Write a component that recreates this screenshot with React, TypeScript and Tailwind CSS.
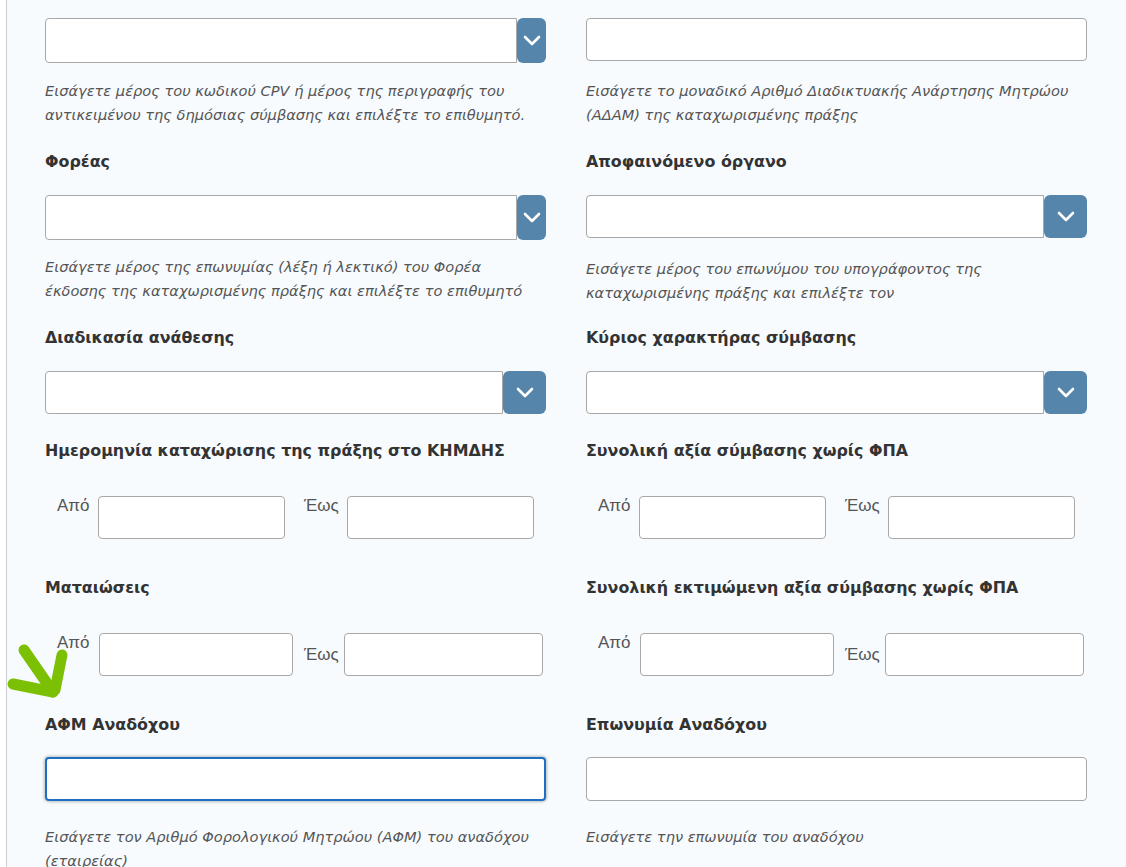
import React from 'react';

const label = 'text-[15.9px] leading-[22px] font-bold text-[#333]';
const help = 'text-[14.6px] leading-[24px] italic text-[#555]';
const box = 'bg-white border border-[#a8a8a8] rounded-[4px]';
const small = 'text-[17px] leading-[20px] text-[#555] font-["Liberation_Sans",Arial,sans-serif]';

function Chevron() {
  return (
    <svg width="18" height="11" viewBox="0 0 18 11" fill="none">
      <path d="M2 2l7 7 7-7" stroke="white" strokeWidth="2.6" strokeLinecap="round" strokeLinejoin="round" />
    </svg>
  );
}

function Combo({ btn, h = 'h-[45px]' }: { btn: string; h?: string }) {
  return (
    <div className={`flex ${h}`}>
      <div className="flex-1 bg-white border border-[#a8a8a8] rounded-l-[4px]" />
      <button className={`${btn} h-full bg-[#5585ab] rounded-[6px] flex items-center justify-center`}>
        <Chevron />
      </button>
    </div>
  );
}

function RangeA() {
  return (
    <div className="flex items-start pl-3">
      <span className={small + ' w-[31px]'}>Από</span>
      <div className={box + ' ml-[10px] w-[187px] h-[43px]'} />
      <span className={small + ' ml-[19px] w-[36px]'}>Έως</span>
      <div className={box + ' ml-[7px] w-[187px] h-[43px]'} />
    </div>
  );
}

function RangeB() {
  return (
    <div className="flex items-start pl-3">
      <span className={small + ' w-[31px]'}>Από</span>
      <div className={box + ' ml-[11px] w-[194px] h-[43px]'} />
      <span className={small + ' ml-[11px] w-[36px] mt-[12px]'}>Έως</span>
      <div className={box + ' ml-[4px] w-[199px] h-[43px]'} />
    </div>
  );
}

export default function App() {
  return (
    <div className="min-h-screen bg-white font-['DejaVu_Sans',Verdana,sans-serif] relative">
      <div className="ml-[6px] border-l border-[#cfcfcf] bg-[#f7fbfe] min-h-[867px] pl-[38px] pr-[39px] pt-[18px] pb-4">
        <div className="grid grid-cols-2 gap-x-10">
          <Combo btn="w-[29px]" />
          <div className={box + ' h-[43px]'} />

          <p className={help + ' mt-4'}>
            Εισάγετε μέρος του κωδικού CPV ή μέρος της περιγραφής του<br />
            αντικειμένου της δημόσιας σύμβασης και επιλέξτε το επιθυμητό.
          </p>
          <p className={help + ' mt-4'}>
            Εισάγετε το μοναδικό Αριθμό Διαδικτυακής Ανάρτησης Μητρώου<br />
            (ΑΔΑΜ) της καταχωρισμένης πράξης
          </p>

          <div className={label + ' mt-6'}>Φορέας</div>
          <div className={label + ' mt-6'}>Αποφαινόμενο όργανο</div>

          <div className="mt-[22px]">
            <Combo btn="w-[29px]" />
          </div>
          <div className="mt-[22px]">
            <Combo btn="w-[43px]" h="h-[43px]" />
          </div>

          <p className={help + ' mt-[15px]'}>
            Εισάγετε μέρος της επωνυμίας (λέξη ή λεκτικό) του Φορέα<br />
            έκδοσης της καταχωρισμένης πράξης και επιλέξτε το επιθυμητό
          </p>
          <p className={help + ' mt-[17px]'}>
            Εισάγετε μέρος του επωνύμου του υπογράφοντος της<br />
            καταχωρισμένης πράξης και επιλέξτε τον
          </p>

          <div className={label + ' mt-[22px]'}>Διαδικασία ανάθεσης</div>
          <div className={label + ' mt-[22px]'}>Κύριος χαρακτήρας σύμβασης</div>

          <div className="mt-[22px]">
            <Combo btn="w-[43px]" h="h-[43px]" />
          </div>
          <div className="mt-[22px]">
            <Combo btn="w-[43px]" h="h-[43px]" />
          </div>

          <div className={label + ' mt-[26px]'}>Ημερομηνία καταχώρισης της πράξης στο ΚΗΜΔΗΣ</div>
          <div className={label + ' mt-[26px]'}>Συνολική αξία σύμβασης χωρίς ΦΠΑ</div>

          <div className="mt-[34px]">
            <RangeA />
          </div>
          <div className="mt-[34px]">
            <RangeA />
          </div>

          <div className={label + ' mt-[38px]'}>Ματαιώσεις</div>
          <div className={label + ' mt-[38px]'}>Συνολική εκτιμώμενη αξία σύμβασης χωρίς ΦΠΑ</div>

          <div className="mt-[34px]">
            <RangeB />
          </div>
          <div className="mt-[34px]">
            <RangeB />
          </div>

          <div className={label + ' mt-[38px]'}>ΑΦΜ Αναδόχου</div>
          <div className={label + ' mt-[38px]'}>Επωνυμία Αναδόχου</div>

          <div className="mt-[21px] h-[44px] bg-white border-2 border-[#1f6fc0] rounded-[4px] shadow-[0_0_3px_1px_rgba(0,0,0,0.25)]" />
          <div className={box + ' mt-[21px] h-[44px]'} />

          <p className={help + ' mt-6'}>
            Εισάγετε τον Αριθμό Φορολογικού Μητρώου (ΑΦΜ) του αναδόχου<br />
            (εταιρείας)
          </p>
          <p className={help + ' mt-6'}>Εισάγετε την επωνυμία του αναδόχου</p>
        </div>
      </div>

      <svg className="absolute left-0 top-[640px]" width="80" height="70" viewBox="0 0 80 70" fill="none">
        <g stroke="#7cc003" strokeWidth="11" strokeLinecap="round" strokeLinejoin="round">
          <path d="M24 10L53 52" />
          <path d="M13 44L53 52" />
          <path d="M62 15L55 50" />
        </g>
      </svg>
    </div>
  );
}
